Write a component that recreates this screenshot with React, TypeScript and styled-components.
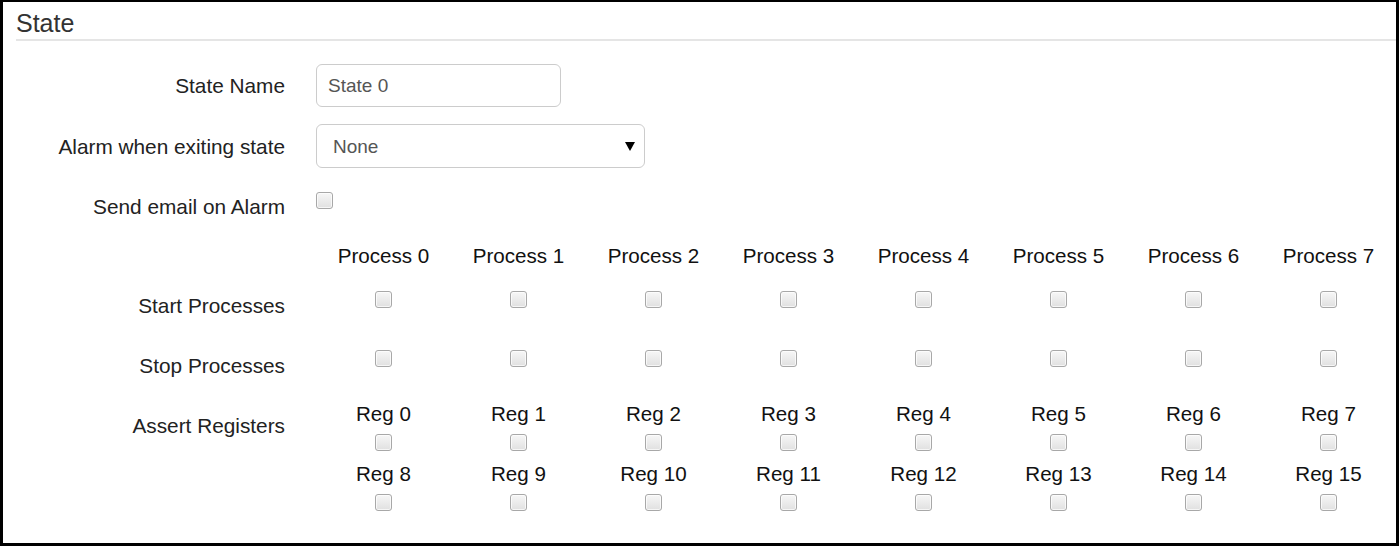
import React from "react";
import styled, { createGlobalStyle } from "styled-components";

const GlobalStyle = createGlobalStyle`
  html, body {
    margin: 0;
    padding: 0;
    background: #ffffff;
  }
  body {
    font-family: "Liberation Sans", Arial, sans-serif;
  }
  * {
    box-sizing: border-box;
  }
`;

const Frame = styled.div`
  width: 1399px;
  height: 546px;
  border: 3px solid #000;
  border-top-width: 2px;
  background: #fff;
  overflow: hidden;
`;

const Legend = styled.div`
  margin-left: 13px;
  height: 39px;
  padding-top: 6px;
  line-height: 31px;
  font-size: 25px;
  color: #333;
  border-bottom: 2px solid #e5e5e5;
`;

const Row = styled.div<{ $top: number; $height: number }>`
  display: grid;
  grid-template-columns: 282px 1080px;
  grid-template-rows: ${(p) => p.$height}px;
  column-gap: 31px;
  margin-top: ${(p) => p.$top}px;
  height: ${(p) => p.$height}px;
`;

const Label = styled.div<{ $h?: number }>`
  height: ${(p) => p.$h ?? 44}px;
  display: flex;
  align-items: center;
  justify-content: flex-end;
  font-size: 20.8px;
  color: #222;
  white-space: nowrap;
`;

const Control = styled.div`
  display: flex;
  align-items: center;
`;

const TextInput = styled.input`
  width: 245px;
  height: 43px;
  border: 1px solid #ccc;
  border-radius: 6px;
  padding: 0 11px;
  font-family: inherit;
  font-size: 19px;
  color: #555;
  outline: none;
`;

const SelectWrap = styled.div`
  position: relative;
  width: 329px;
  height: 44px;
`;

const Select = styled.select`
  appearance: none;
  width: 100%;
  height: 100%;
  border: 1px solid #ccc;
  border-radius: 6px;
  padding: 0 16px;
  background: #fff;
  font-family: inherit;
  font-size: 19px;
  color: #555;
  outline: none;
`;

const Caret = styled.svg`
  position: absolute;
  right: 10px;
  top: 17px;
  pointer-events: none;
`;

const Check = styled.input.attrs({ type: "checkbox" })<{ $top?: number }>`
  appearance: none;
  margin: ${(p) => p.$top ?? 0}px 0 0 0;
  width: 17px;
  height: 17px;
  border: 1px solid #a8a8a8;
  border-radius: 3px;
  background: linear-gradient(#f7f7f7, #e0e0e0);
  box-shadow: inset 0 0 0 1px rgba(255, 255, 255, 0.7);
`;

const Columns = styled.div`
  display: grid;
  grid-template-columns: repeat(8, 135px);
`;

const Cell = styled.div<{ $pad?: number }>`
  display: flex;
  flex-direction: column;
  align-items: center;
  padding-top: ${(p) => p.$pad ?? 0}px;
`;

const Head = styled.div<{ $lh: number }>`
  font-size: 20.6px;
  line-height: ${(p) => p.$lh}px;
  color: #111;
  white-space: nowrap;
`;

const RegCell = styled.div`
  height: 60px;
  display: flex;
  flex-direction: column;
  align-items: center;
`;

const range = (n: number) => Array.from({ length: n }, (_, i) => i);

export default function App() {
  return (
    <>
      <GlobalStyle />
      <Frame>
        <Legend>State</Legend>

        <Row $top={23} $height={43}>
          <Label $h={44}>State Name</Label>
          <Control>
            <TextInput defaultValue="State 0" />
          </Control>
        </Row>

        <Row $top={17} $height={44}>
          <Label $h={46}>Alarm when exiting state</Label>
          <Control>
            <SelectWrap>
              <Select defaultValue="none">
                <option value="none">None</option>
              </Select>
              <Caret width="10" height="10" viewBox="0 0 10 10">
                <path d="M0 1 L10 1 L5 10 Z" fill="#000" />
              </Caret>
            </SelectWrap>
          </Control>
        </Row>

        <Row $top={17} $height={44}>
          <Label>Send email on Alarm</Label>
          <div>
            <Check $top={7} />
          </div>
        </Row>

        <Row $top={10} $height={34}>
          <div />
          <Columns>
            {range(8).map((i) => (
              <Cell key={i}>
                <Head $lh={34}>Process {i}</Head>
              </Cell>
            ))}
          </Columns>
        </Row>

        <Row $top={10} $height={44}>
          <Label $h={46}>Start Processes</Label>
          <Columns>
            {range(8).map((i) => (
              <Cell key={i} $pad={8}>
                <Check />
              </Cell>
            ))}
          </Columns>
        </Row>

        <Row $top={16} $height={44}>
          <Label $h={46}>Stop Processes</Label>
          <Columns>
            {range(8).map((i) => (
              <Cell key={i} $pad={7}>
                <Check />
              </Cell>
            ))}
          </Columns>
        </Row>

        <Row $top={16} $height={120}>
          <Label $h={46}>Assert Registers</Label>
          <Columns>
            {range(16).map((i) => (
              <RegCell key={i}>
                <Head $lh={22}>Reg {i}</Head>
                <Check $top={9} />
              </RegCell>
            ))}
          </Columns>
        </Row>
      </Frame>
    </>
  );
}
